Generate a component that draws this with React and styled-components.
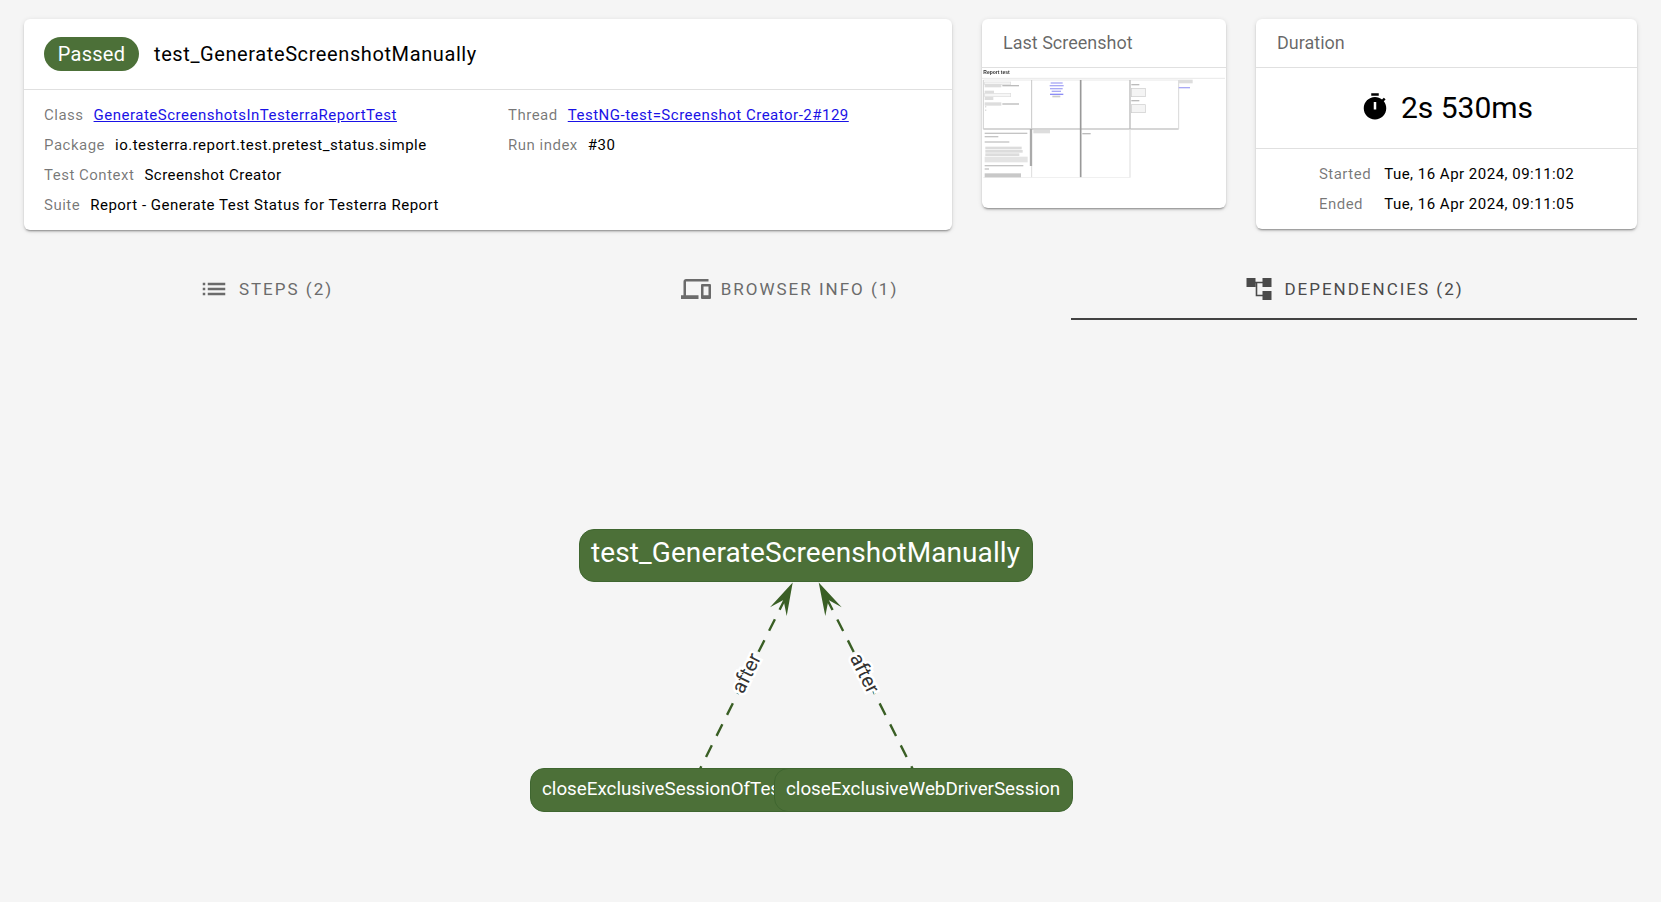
import React from "react";
import styled, { createGlobalStyle } from "styled-components";

const Global = createGlobalStyle`
  html, body { margin: 0; padding: 0; background: #f5f5f5; overflow: hidden; }
  body { font-family: Roboto, "Liberation Sans", sans-serif; color: #000; }
`;

const Page = styled.div`
  width: 1661px;
  height: 902px;
  box-sizing: border-box;
  padding: 19px 24px 0;
  display: flex;
  flex-direction: column;
`;

const TopRow = styled.div`
  display: grid;
  grid-template-columns: 928px 244px 381px;
  column-gap: 30px;
  align-items: start;
`;

const Card = styled.section`
  background: #fff;
  border-radius: 6px;
  overflow: hidden;
  box-shadow: 0 3px 1px -2px rgba(0, 0, 0, 0.2), 0 2px 2px 0 rgba(0, 0, 0, 0.14), 0 1px 5px 0 rgba(0, 0, 0, 0.12);
`;

const MainHeader = styled.header`
  height: 71px;
  box-sizing: border-box;
  padding: 0 20px;
  display: flex;
  align-items: center;
  gap: 15px;
  border-bottom: 1px solid rgba(0, 0, 0, 0.12);
`;

const Badge = styled.span`
  width: 95px;
  height: 34px;
  border-radius: 17px;
  background: #4c7038;
  color: #fff;
  font-size: 20px;
  letter-spacing: 0.25px;
  display: flex;
  align-items: center;
  justify-content: center;
`;

const TestTitle = styled.h1`
  margin: 0;
  font-size: 20px;
  font-weight: 400;
  letter-spacing: 0.6px;
  color: #000;
`;

const InfoGrid = styled.div`
  display: grid;
  grid-template-columns: 464px 1fr;
  padding: 10px 20px;
`;

const InfoRow = styled.div`
  height: 30px;
  display: flex;
  align-items: center;
  gap: 10px;
  font-size: 15px;
  letter-spacing: 0.5px;
  white-space: nowrap;
`;

const Label = styled.span`
  color: rgba(0, 0, 0, 0.54);
`;

const Value = styled.span`
  color: #000;
`;

const LinkValue = styled.a`
  color: #1a12e6;
  text-decoration: underline;
`;

const SmallHeader = styled.header`
  height: 49px;
  box-sizing: border-box;
  padding: 0 21px 1px;
  display: flex;
  align-items: center;
  font-size: 18px;
  color: rgba(0, 0, 0, 0.6);
  border-bottom: 1px solid rgba(0, 0, 0, 0.12);
`;

const Thumb = styled.svg`
  display: block;
  width: 244px;
  height: 110px;
  margin-bottom: 30px;
`;

const DurationBody = styled.div`
  height: 81px;
  box-sizing: border-box;
  padding-bottom: 2px;
  display: flex;
  align-items: center;
  justify-content: center;
  gap: 11px;
  font-size: 30px;
  border-bottom: 1px solid rgba(0, 0, 0, 0.12);
`;

const TimerIcon = styled.svg`
  width: 30px;
  height: 30px;
  fill: #000;
`;

const TimesWrap = styled.div`
  display: flex;
  justify-content: center;
  padding: 10px 0;
`;

const Times = styled.dl`
  margin: 0;
  display: grid;
  grid-template-columns: auto auto;
  column-gap: 13px;
  grid-auto-rows: 30px;
  align-items: center;
  font-size: 15px;
  letter-spacing: 0.5px;
`;

const TimeLabel = styled.dt`
  color: rgba(0, 0, 0, 0.54);
`;

const TimeValue = styled.dd`
  margin: 0;
  color: #000;
`;

const Tabs = styled.nav`
  margin-top: 29px;
  display: grid;
  grid-template-columns: 484px 563px 566px;
`;

const Tab = styled.div`
  height: 61px;
  box-sizing: border-box;
  display: flex;
  align-items: center;
  justify-content: center;
  gap: 10px;
  font-size: 17px;
  font-weight: 400;
  letter-spacing: 2px;
  text-transform: uppercase;
  color: ${(p) => (p.$active ? "#4a4a4a" : "#6b6b6b")};
  border-bottom: 2px solid ${(p) => (p.$active ? "#424242" : "transparent")};
`;

const TabIcon = styled.svg`
  width: 30px;
  height: 30px;
  fill: currentColor;
`;

const Graph = styled.div`
  position: relative;
  flex: 1;
`;

const Edges = styled.svg`
  position: absolute;
  left: -24px;
  top: -320px;
  width: 1661px;
  height: 902px;
  pointer-events: none;
`;

const EdgeLabel = styled.text`
  font-family: Roboto, "Liberation Sans", sans-serif;
  font-size: 20px;
  fill: #333;
  stroke: #fff;
  stroke-width: 5px;
  paint-order: stroke;
  text-anchor: middle;
  dominant-baseline: central;
`;

const Node = styled.div`
  position: absolute;
  left: ${(p) => p.$x - 24}px;
  top: ${(p) => p.$y - 320}px;
  width: ${(p) => p.$w}px;
  height: ${(p) => p.$h}px;
  box-sizing: border-box;
  padding: 0 0 ${(p) => (p.$big ? 6 : 3)}px 11px;
  display: flex;
  align-items: center;
  white-space: nowrap;
  background: #4c7038;
  border: 1px solid #3f6630;
  border-radius: ${(p) => (p.$big ? 15 : 14)}px;
  color: #fff;
  font-size: ${(p) => (p.$big ? 28 : 18.8)}px;
  letter-spacing: ${(p) => (p.$big ? 0.1 : 0)}px;
`;

const rects = [
  [44, 66, 78, 8, "#f4f4f4", "#ddd"], [44, 72, 50, 10, "#ddd"], [97, 75, 50, 4, "#bbb"],
  [44, 92, 28, 9, "#ddd"], [44, 100, 78, 10, "#f6f6f6", "#ddd"], [44, 111, 26, 9, "#ddd"],
  [44, 127, 50, 10, "#ddd"], [97, 130, 50, 4, "#bbb"], [45, 139, 4, 3, "#ccc"], [45, 149, 4, 3, "#ccc"],
  [242, 67, 36, 4, "#a9a9f5"], [239, 75, 42, 4, "#a9a9f5"], [240, 84, 38, 4, "#a9a9f5"], [245, 92, 28, 4, "#a9a9f5"],
  [240, 101, 40, 4, "#8d8df5"], [247, 107, 24, 5, "#ccc"],
  [484, 72, 24, 4, "#bbb"], [484, 85, 42, 25, "#f4f4f4", "#ccc"], [484, 120, 24, 4, "#bbb"], [484, 134, 42, 24, "#f4f4f4", "#ccc"],
  [626, 59, 42, 11, "#ddd"], [626, 81, 34, 4, "#a9a9f5"],
  [44, 218, 128, 4, "#c4c4c4"], [44, 228, 41, 4, "#c4c4c4"], [44, 244, 74, 4, "#c4c4c4"],
  [46, 260, 109, 8, "#dcdcdc"], [46, 270, 112, 8, "#dcdcdc"], [46, 280, 102, 8, "#dcdcdc"],
  [44, 290, 129, 17, "#e4e4e4"], [44, 315, 116, 4, "#c4c4c4"], [44, 325, 13, 4, "#c4c4c4"], [44, 340, 109, 12, "#c8c8c8"],
  [190, 210, 50, 10, "#ddd"], [337, 219, 25, 4, "#bbb"],
];

const lines = [
  [36, 55, 765, 55, "#e8e8e8", 3], [40, 60, 626, 60, "#e8e8e8", 3], [40, 207, 626, 207, "#c8c8c8", 4],
  [40, 60, 40, 207, "#d0d0d0", 3], [185, 60, 185, 207, "#c8c8c8", 3], [332, 60, 332, 207, "#999", 5],
  [480, 60, 480, 207, "#bbb", 4], [626, 60, 626, 207, "#d8d8d8", 3],
  [183, 207, 183, 318, "#aaa", 7], [185, 318, 185, 353, "#ddd", 3], [332, 207, 332, 353, "#999", 5],
  [480, 207, 480, 353, "#ddd", 3], [40, 353, 480, 353, "#eee", 3],
];

const ThumbDrawing = () => (
  <Thumb viewBox="36 24 732 330" aria-hidden="true">
    <defs>
      <filter id="soft" x="0" y="0" width="100%" height="100%">
        <feGaussianBlur stdDeviation="1.6" />
      </filter>
    </defs>
    <g filter="url(#soft)">
      <text x="40" y="41" fontSize="15" fontWeight="700" fontFamily="Liberation Sans, sans-serif" fill="#333">
        Report test
      </text>
      {lines.map(([a, b, c, d, col, w], i) => (
        <line key={i} x1={a} y1={b} x2={c} y2={d} stroke={col} strokeWidth={w} />
      ))}
      {rects.map(([x, y, w, h, fill, stroke], i) => (
        <rect key={i} x={x} y={y} width={w} height={h} fill={fill} stroke={stroke} strokeWidth={stroke ? 2 : 0} />
      ))}
    </g>
  </Thumb>
);

const Edge = ({ d, head, lx, ly, angle }) => (
  <g>
    <path d={d} fill="none" stroke="#3a5f25" strokeWidth="2.4" strokeDasharray="13 10.5" strokeDashoffset="10" />
    <path d={head} fill="#3a5f25" />
    <EdgeLabel x={lx} y={ly} transform={`rotate(${angle} ${lx} ${ly})`}>
      after
    </EdgeLabel>
  </g>
);

export default function App() {
  return (
    <Page>
      <Global />
      <TopRow>
        <Card>
          <MainHeader>
            <Badge>Passed</Badge>
            <TestTitle>test_GenerateScreenshotManually</TestTitle>
          </MainHeader>
          <InfoGrid>
            <InfoRow>
              <Label>Class</Label>
              <LinkValue href="#">GenerateScreenshotsInTesterraReportTest</LinkValue>
            </InfoRow>
            <InfoRow>
              <Label>Thread</Label>
              <LinkValue href="#">TestNG-test=Screenshot Creator-2#129</LinkValue>
            </InfoRow>
            <InfoRow>
              <Label>Package</Label>
              <Value>io.testerra.report.test.pretest_status.simple</Value>
            </InfoRow>
            <InfoRow>
              <Label>Run index</Label>
              <Value>#30</Value>
            </InfoRow>
            <InfoRow>
              <Label>Test Context</Label>
              <Value>Screenshot Creator</Value>
            </InfoRow>
            <InfoRow />
            <InfoRow>
              <Label>Suite</Label>
              <Value>Report - Generate Test Status for Testerra Report</Value>
            </InfoRow>
          </InfoGrid>
        </Card>
        <Card>
          <SmallHeader>Last Screenshot</SmallHeader>
          <ThumbDrawing />
        </Card>
        <Card>
          <SmallHeader>Duration</SmallHeader>
          <DurationBody>
            <TimerIcon viewBox="0 0 24 24">
              <path d="M19.03 7.39l1.42-1.42c-.43-.51-.9-.99-1.41-1.41l-1.42 1.42C16.07 4.74 14.12 4 12 4c-4.97 0-9 4.03-9 9s4.02 9 9 9 9-4.03 9-9c0-2.12-.74-4.07-1.97-5.61zM13 14h-2V8h2v6zM15 1H9v2h6V1z" />
            </TimerIcon>
            2s 530ms
          </DurationBody>
          <TimesWrap>
            <Times>
              <TimeLabel>Started</TimeLabel>
              <TimeValue>Tue, 16 Apr 2024, 09:11:02</TimeValue>
              <TimeLabel>Ended</TimeLabel>
              <TimeValue>Tue, 16 Apr 2024, 09:11:05</TimeValue>
            </Times>
          </TimesWrap>
        </Card>
      </TopRow>
      <Tabs>
        <Tab>
          <TabIcon viewBox="0 0 24 24">
            <path d="M3 13h2v-2H3v2zm0 4h2v-2H3v2zm0-8h2V7H3v2zm4 4h14v-2H7v2zm0 4h14v-2H7v2zM7 7v2h14V7H7z" />
          </TabIcon>
          Steps (2)
        </Tab>
        <Tab>
          <TabIcon viewBox="0 0 24 24">
            <path d="M4 6h18V4H4c-1.1 0-2 .9-2 2v11H0v3h14v-3H4V6zm19 2h-6c-.55 0-1 .45-1 1v10c0 .55.45 1 1 1h6c.55 0 1-.45 1-1V9c0-.55-.45-1-1-1zm-1 9h-4v-7h4v7z" />
          </TabIcon>
          Browser Info (1)
        </Tab>
        <Tab $active>
          <TabIcon viewBox="0 0 30 30">
            <path d="M2.5 4h9v9h-9zM18.5 4h9v9h-9zM18.5 17h9v9h-9zM11.5 7.7h7v1.6h-5.2v11.4h5.2v1.6h-6.8V9.3h-.2z" />
          </TabIcon>
          Dependencies (2)
        </Tab>
      </Tabs>
      <Graph>
        <Edges viewBox="0 0 1661 902" aria-hidden="true">
          <Edge
            d="M700 769 L785 599"
            head="M792.7 582.5 L786.7 616 L783.5 600 L770 607.3 Z"
            lx={746}
            ly={673}
            angle={-63.6}
          />
          <Edge
            d="M912.7 769 L827 599"
            head="M818.7 582.5 L825.3 616 L828.5 600 L841.7 607.3 Z"
            lx={865}
            ly={673}
            angle={63.6}
          />
        </Edges>
        <Node $big $x={579} $y={529} $w={454} $h={53}>
          test_GenerateScreenshotManually
        </Node>
        <Node $x={530} $y={768} $w={303} $h={44}>
          closeExclusiveSessionOfTestUser
        </Node>
        <Node $x={774} $y={768} $w={299} $h={44}>
          closeExclusiveWebDriverSession
        </Node>
      </Graph>
    </Page>
  );
}
